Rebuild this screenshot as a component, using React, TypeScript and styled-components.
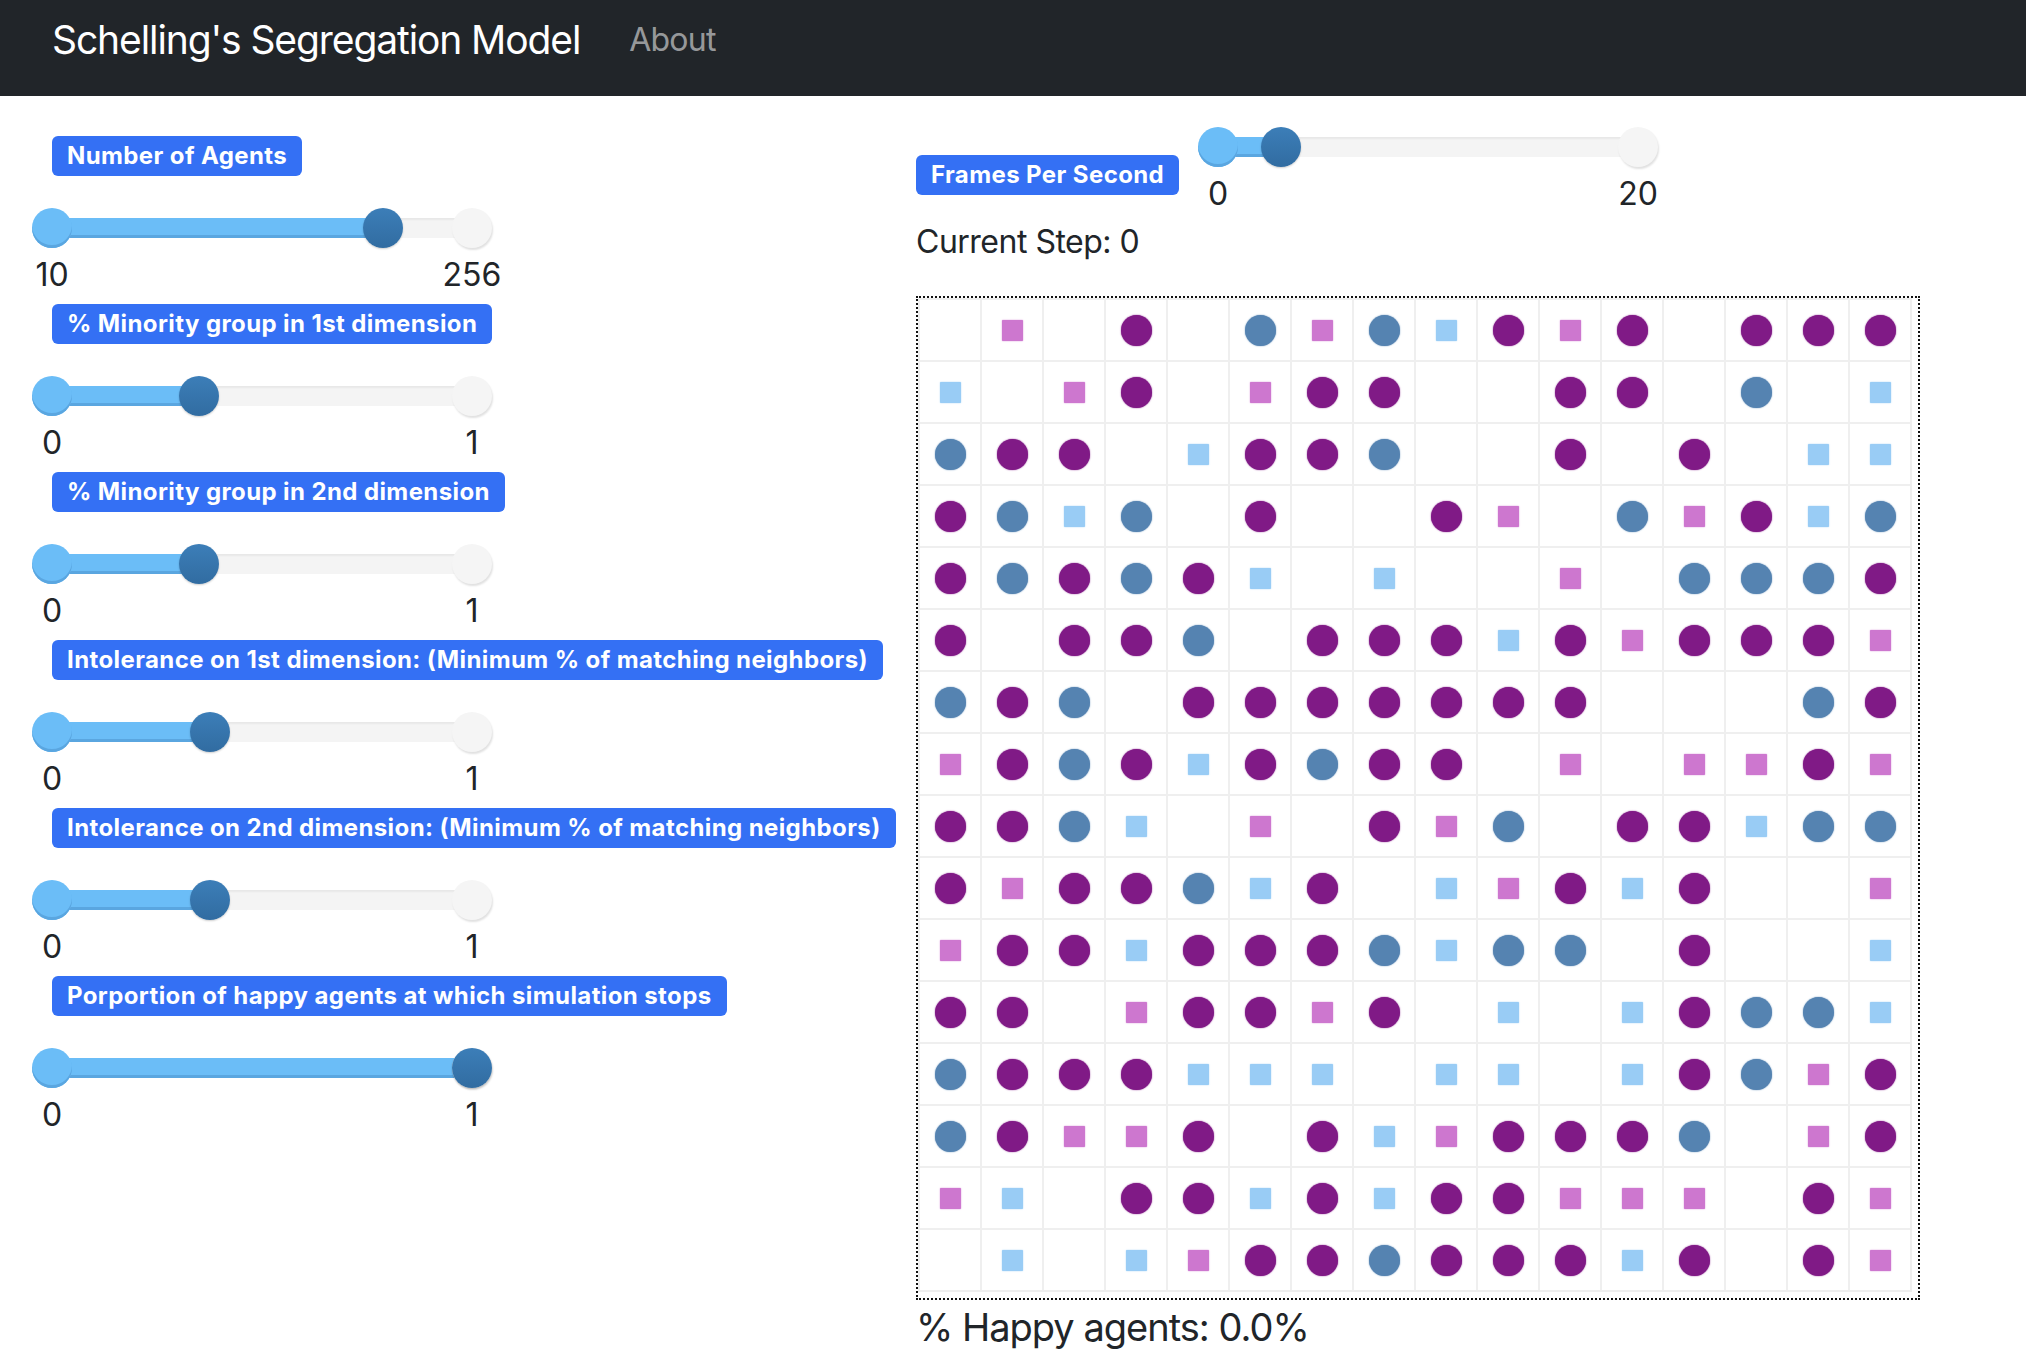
import styled, { createGlobalStyle } from "styled-components";

const GlobalStyle = createGlobalStyle`
  *, *::before, *::after {
    box-sizing: border-box;
  }
  body {
    margin: 0;
    background: #fff;
    color: #212529;
    font-family: Inter, "Liberation Sans", Arial, sans-serif;
  }
`;

const Navbar = styled.nav`
  height: 96px;
  background: #212529;
  display: flex;
  align-items: center;
  padding: 0 0 16px 52px;
`;

const Brand = styled.a`
  color: #fff;
  font-size: 39px;
  line-height: 48px;
  margin-right: 49px;
  letter-spacing: -1.1px;
`;

const NavLink = styled.a`
  color: rgba(255, 255, 255, 0.55);
  font-size: 32px;
  line-height: 48px;
  letter-spacing: -0.8px;
`;

const Main = styled.main`
  display: flex;
  align-items: flex-start;
`;

const Controls = styled.section`
  width: 916px;
  padding: 40px 0 0 32px;
  display: flex;
  flex-direction: column;
`;

const Control = styled.div`
  display: flex;
  flex-direction: column;
  align-items: flex-start;
  margin-bottom: 5px;
`;

const Badge = styled.span`
  display: inline-block;
  background: #3470f4;
  color: #fff;
  font-weight: 700;
  font-size: 24px;
  line-height: 24px;
  letter-spacing: 0.4px;
  padding: 8px 15px;
  border-radius: 6px;
  white-space: nowrap;
`;

const ControlBadge = styled(Badge)`
  margin-left: 20px;
  margin-bottom: 32px;
`;

const FpsBadge = styled(Badge)`
  margin-top: 4px;
`;

const SliderBlock = styled.div`
  width: 460px;
  flex-shrink: 0;
`;

const TrackArea = styled.div`
  height: 40px;
  padding: 10px 20px;
`;

const Rail = styled.div`
  position: relative;
  height: 20px;
  background: #f4f4f4;
  box-shadow: inset 0 2px 2px rgba(0, 0, 0, 0.05);
`;

const Fill = styled.div`
  position: absolute;
  left: 0;
  top: 0;
  bottom: 0;
  background: #6bbdf7;
  box-shadow: inset 0 -3px 0 #5aa6e0;
`;

const Knob = styled.span<{ $at: "start" | "end" }>`
  position: absolute;
  top: 50%;
  left: ${(p) => (p.$at === "start" ? "0%" : "100%")};
  width: 40px;
  height: 40px;
  border-radius: 50%;
  transform: translate(-50%, -50%);
  background: ${(p) => (p.$at === "start" ? "#6bbdf7" : "#f5f5f5")};
  box-shadow: ${(p) =>
    p.$at === "start"
      ? "inset 0 -3px 0 #5aa6e0"
      : "1px 2px 2px rgba(0, 0, 0, 0.12)"};
`;

const Handle = styled.span`
  position: absolute;
  top: 50%;
  width: 40px;
  height: 40px;
  border-radius: 50%;
  transform: translate(-50%, -50%);
  background: linear-gradient(#3c7eb8, #316ca1);
  box-shadow: 0 1px 2px rgba(0, 0, 0, 0.2);
`;

const Scale = styled.div`
  display: flex;
  justify-content: space-between;
  margin-top: 3px;
`;

const Tick = styled.span`
  width: 40px;
  display: flex;
  justify-content: center;
  font-size: 32px;
  line-height: 48px;
  white-space: nowrap;
`;

const Simulation = styled.section`
  padding-top: 31px;
  display: flex;
  flex-direction: column;
  align-items: flex-start;
`;

const FpsRow = styled.div`
  display: flex;
  align-items: center;
  gap: 19px;
`;

const StepText = styled.p`
  margin: 0 0 30px;
  font-size: 32px;
  line-height: 48px;
  letter-spacing: -0.5px;
`;

const Board = styled.div`
  width: 1004px;
  height: 1004px;
  border: 2px dotted #111;
`;

const Grid = styled.div`
  display: inline-grid;
  grid-template-columns: repeat(16, 60px);
  grid-auto-rows: 60px;
  gap: 2px;
  padding: 2px;
  background: #efefef;
`;

const Cell = styled.div`
  background: #fff;
  display: flex;
  align-items: center;
  justify-content: center;
`;

const AGENT_COLORS: Record<string, string> = {
  P: "#801a86",
  B: "#5583b1",
  p: "#cd77cf",
  b: "#99ccf5",
};

const Agent = styled.span<{ $kind: string }>`
  display: block;
  width: ${(p) => (p.$kind === "P" || p.$kind === "B" ? 31 : 21)}px;
  height: ${(p) => (p.$kind === "P" || p.$kind === "B" ? 31 : 21)}px;
  border-radius: ${(p) => (p.$kind === "P" || p.$kind === "B" ? "50%" : "1px")};
  background: ${(p) => AGENT_COLORS[p.$kind]};
  box-shadow: 0 0 1.5px ${(p) => AGENT_COLORS[p.$kind]};
`;

const HappyText = styled.p`
  margin: 3px 0 0;
  font-size: 38px;
  line-height: 48px;
  letter-spacing: -1px;
`;

const GRID = [
  ". p . P . B p B b P p P . P P P",
  "b . p P . p P P . . P P . B . b",
  "B P P . b P P B . . P . P . b b",
  "P B b B . P . . P p . B p P b B",
  "P B P B P b . b . . p . B B B P",
  "P . P P B . P P P b P p P P P p",
  "B P B . P P P P P P P . . . B P",
  "p P B P b P B P P . p . p p P p",
  "P P B b . p . P p B . P P b B B",
  "P p P P B b P . b p P b P . . p",
  "p P P b P P P B b B B . P . . b",
  "P P . p P P p P . b . b P B B b",
  "B P P P b b b . b b . b P B p P",
  "B P p p P . P b p P P P B . p P",
  "p b . P P b P b P P p p p . P p",
  ". b . b p P P B P P P b P . P p",
];

const CONTROLS = [
  { label: "Number of Agents", min: 10, max: 256, value: 204 },
  { label: "% Minority group in 1st dimension", min: 0, max: 1, value: 0.35 },
  { label: "% Minority group in 2nd dimension", min: 0, max: 1, value: 0.35 },
  {
    label: "Intolerance on 1st dimension: (Minimum % of matching neighbors)",
    min: 0,
    max: 1,
    value: 0.375,
  },
  {
    label: "Intolerance on 2nd dimension: (Minimum % of matching neighbors)",
    min: 0,
    max: 1,
    value: 0.375,
  },
  {
    label: "Porportion of happy agents at which simulation stops",
    min: 0,
    max: 1,
    value: 1,
  },
];

type SliderProps = {
  min: number;
  max: number;
  value: number;
};

function RangeSlider({ min, max, value }: SliderProps) {
  const pct = ((value - min) / (max - min)) * 100;
  return (
    <SliderBlock>
      <TrackArea>
        <Rail>
          <Fill style={{ width: `${pct}%` }} />
          <Knob $at="start" />
          <Knob $at="end" />
          <Handle style={{ left: `${pct}%` }} />
        </Rail>
      </TrackArea>
      <Scale>
        <Tick>{min}</Tick>
        <Tick>{max}</Tick>
      </Scale>
    </SliderBlock>
  );
}

export default function App() {
  return (
    <>
      <GlobalStyle />
      <Navbar>
        <Brand>Schelling's Segregation Model</Brand>
        <NavLink>About</NavLink>
      </Navbar>
      <Main>
        <Controls>
          {CONTROLS.map((c) => (
            <Control key={c.label}>
              <ControlBadge>{c.label}</ControlBadge>
              <RangeSlider min={c.min} max={c.max} value={c.value} />
            </Control>
          ))}
        </Controls>
        <Simulation>
          <FpsRow>
            <FpsBadge>Frames Per Second</FpsBadge>
            <RangeSlider min={0} max={20} value={3} />
          </FpsRow>
          <StepText>Current Step: 0</StepText>
          <Board>
            <Grid>
              {GRID.flatMap((row, r) =>
                row.split(" ").map((k, c) => (
                  <Cell key={`${r}-${c}`}>{k !== "." && <Agent $kind={k} />}</Cell>
                ))
              )}
            </Grid>
          </Board>
          <HappyText>% Happy agents: 0.0%</HappyText>
        </Simulation>
      </Main>
    </>
  );
}
